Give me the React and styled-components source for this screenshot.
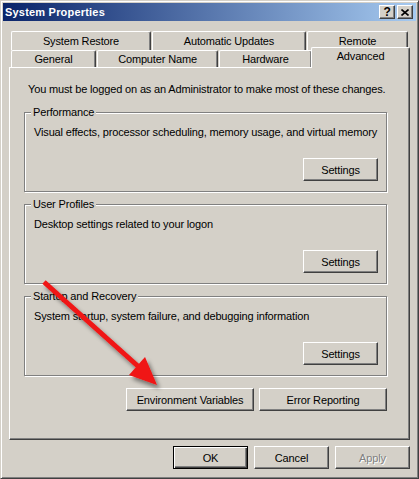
import React from "react"
import styled, { createGlobalStyle } from "styled-components"

const GlobalStyle = createGlobalStyle`
  html, body {
    margin: 0;
    padding: 0;
    background: #d4d0c8;
  }
  body {
    font-family: "Liberation Sans", Arial, sans-serif;
  }
`

const Window = styled.div`
  position: relative;
  width: 419px;
  height: 479px;
  box-sizing: border-box;
  padding: 2px;
  display: flex;
  flex-direction: column;
  background: #d4d0c8;
  border: 1px solid;
  border-color: #d4d0c8 #404040 #404040 #d4d0c8;
  box-shadow: inset 1px 1px #fff, inset -1px -1px #808080;
  font-family: "Liberation Sans", Arial, sans-serif;
  font-size: 11px;
  letter-spacing: -0.15px;
  color: #000;
  white-space: nowrap;
`

const TitleBar = styled.div`
  height: 18px;
  display: flex;
  align-items: center;
  justify-content: space-between;
  padding: 0 3px 0 2px;
  background: linear-gradient(to right, #0a246a, #a6caf0);
`

const Title = styled.span`
  color: #fff;
  font-weight: bold;
  font-size: 11px;
  letter-spacing: 0.2px;
`

const TitleButtons = styled.div`
  display: flex;
  gap: 2px;
`

const TitleButton = styled.div`
  width: 16px;
  height: 14px;
  box-sizing: border-box;
  display: flex;
  align-items: center;
  justify-content: center;
  background: #d4d0c8;
  border: 1px solid;
  border-color: #fff #404040 #404040 #fff;
  box-shadow: inset -1px -1px #808080;
  font-weight: bold;
  font-size: 12px;
  line-height: 12px;
`

const Body = styled.div`
  display: flex;
  flex-direction: column;
  padding: 10px 6px 0;
`

const TabRow = styled.div`
  display: flex;
  gap: 1px;
  height: ${p => p.$h}px;
  padding-left: 2px;
`

const Tab = styled.div`
  position: relative;
  width: ${p => p.$w}px;
  box-sizing: border-box;
  display: flex;
  justify-content: center;
  align-items: ${p => (p.$active ? "flex-start" : "center")};
  padding-top: ${p => (p.$active ? "2px" : "0")};
  margin: ${p => (p.$active ? "-3px 0 -1px -2px" : "0")};
  z-index: ${p => (p.$active ? 1 : 0)};
  background: #d4d0c8;
  border-top: 1px solid #fff;
  border-left: 1px solid #fff;
  border-right: 1px solid #404040;
  box-shadow: inset -1px 0 #808080;
  border-radius: 2px 2px 0 0;
  line-height: 13px;
`

const Panel = styled.div`
  height: 373px;
  box-sizing: border-box;
  display: flex;
  flex-direction: column;
  padding: 0 22px 0 14px;
  border: 1px solid;
  border-color: #fff #404040 #404040 #fff;
  box-shadow: inset -1px -1px #808080;
`

const Intro = styled.p`
  margin: 15px 0 16px 4px;
  line-height: 13px;
`

const Group = styled.div`
  position: relative;
  height: 80px;
  box-sizing: border-box;
  display: flex;
  flex-direction: column;
  padding: 13px 8px 10px 9px;
  margin-bottom: 12px;
  border: 1px solid #808080;
  box-shadow: inset 1px 1px #fff, 1px 1px #fff;
`

const GroupLabel = styled.span`
  position: absolute;
  top: -7px;
  left: 6px;
  padding: 0 2px;
  background: #d4d0c8;
  line-height: 13px;
`

const GroupText = styled.div`
  line-height: 13px;
`

const ButtonRow = styled.div`
  display: flex;
  justify-content: flex-end;
  gap: ${p => p.$gap || 5}px;
  margin-top: ${p => (p.$top != null ? p.$top + "px" : "auto")};
`

const Button = styled.button`
  width: ${p => p.$w || 75}px;
  height: 23px;
  box-sizing: border-box;
  padding: 0;
  font-family: "Liberation Sans", Arial, sans-serif;
  font-size: 11px;
  letter-spacing: -0.15px;
  color: ${p => (p.disabled ? "#808080" : "#000")};
  text-shadow: ${p => (p.disabled ? "1px 1px 0 #fff" : "none")};
  background: #d4d0c8;
  border: 1px solid;
  border-color: ${p => (p.$default ? "#000" : "#fff #404040 #404040 #fff")};
  box-shadow: ${p =>
    p.$default
      ? "inset 1px 1px #fff, inset -1px -1px #404040, inset -2px -2px #808080"
      : "inset -1px -1px #808080"};
  border-radius: 0;
`

const Overlay = styled.svg`
  position: absolute;
  top: -1px;
  left: -1px;
  width: 419px;
  height: 479px;
  pointer-events: none;
`

const CloseGlyph = () => (
  <svg width="8" height="7" viewBox="0 0 8 7">
    <path d="M0.5 0.5 L7.5 6.5 M7.5 0.5 L0.5 6.5" stroke="#000" strokeWidth="1.6" fill="none" />
  </svg>
)

const groups = [
  {
    label: "Performance",
    text: "Visual effects, processor scheduling, memory usage, and virtual memory",
  },
  { label: "User Profiles", text: "Desktop settings related to your logon" },
  {
    label: "Startup and Recovery",
    text: "System startup, system failure, and debugging information",
  },
]

const App = () => {
  return (
    <>
      <GlobalStyle />
      <Window>
        <TitleBar>
          <Title>System Properties</Title>
          <TitleButtons>
            <TitleButton>?</TitleButton>
            <TitleButton>
              <CloseGlyph />
            </TitleButton>
          </TitleButtons>
        </TitleBar>

        <Body>
          <TabRow $h={19}>
            <Tab $w={140}>System Restore</Tab>
            <Tab $w={154}>Automatic Updates</Tab>
            <Tab $w={101}>Remote</Tab>
          </TabRow>
          <TabRow $h={17}>
            <Tab $w={85}>General</Tab>
            <Tab $w={121}>Computer Name</Tab>
            <Tab $w={93}>Hardware</Tab>
            <Tab $w={99} $active>
              Advanced
            </Tab>
          </TabRow>

          <Panel>
            <Intro>You must be logged on as an Administrator to make most of these changes.</Intro>
            {groups.map(g => (
              <Group key={g.label}>
                <GroupLabel>{g.label}</GroupLabel>
                <GroupText>{g.text}</GroupText>
                <ButtonRow>
                  <Button>Settings</Button>
                </ButtonRow>
              </Group>
            ))}
            <ButtonRow $top={0}>
              <Button $w={128}>Environment Variables</Button>
              <Button $w={128}>Error Reporting</Button>
            </ButtonRow>
          </Panel>

          <ButtonRow $top={6} $gap={6}>
            <Button $default>OK</Button>
            <Button>Cancel</Button>
            <Button disabled>Apply</Button>
          </ButtonRow>
        </Body>

        <Overlay viewBox="0 0 419 479">
          <defs>
            <filter id="arrowShadow" x="-20%" y="-20%" width="140%" height="140%">
              <feDropShadow dx="3" dy="4" stdDeviation="2" floodColor="#000" floodOpacity="0.45" />
            </filter>
          </defs>
          <g filter="url(#arrowShadow)">
            <line x1="44" y1="282" x2="140" y2="368" stroke="#f01414" strokeWidth="5" />
            <polygon points="157,385 129,375 145,357" fill="#f01414" />
          </g>
        </Overlay>
      </Window>
    </>
  )
}

export default App
